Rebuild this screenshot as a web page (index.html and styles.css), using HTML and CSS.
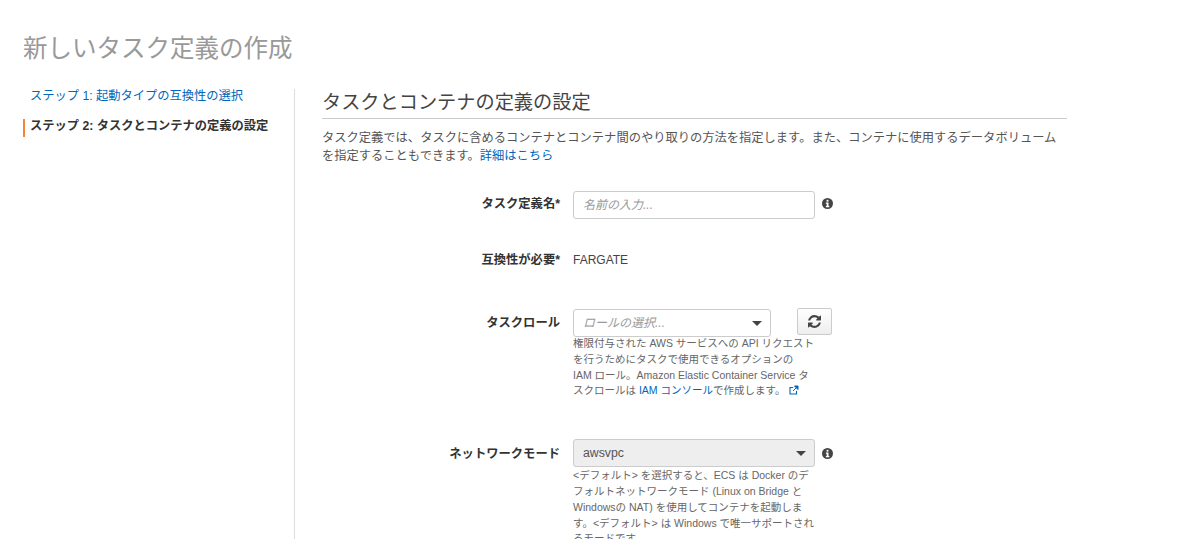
FILE: index.html
```html
<!DOCTYPE html>
<html lang="ja">
<head>
    <meta charset="UTF-8">
    <meta name="viewport" content="width=device-width, initial-scale=1.0">
    <title>新しいタスク定義の作成</title>
    <link rel="stylesheet" href="styles.css">
</head>
<body>
    <h1 class="page-title">新しいタスク定義の作成</h1>

    <div class="wizard">
        <ul class="steps">
            <li class="step"><a href="#">ステップ 1: 起動タイプの互換性の選択</a></li>
            <li class="step step-active">ステップ 2: タスクとコンテナの定義の設定</li>
        </ul>

        <div class="content">
            <h2 class="section-title">タスクとコンテナの定義の設定</h2>
            <p class="intro">タスク定義では、タスクに含めるコンテナとコンテナ間のやり取りの方法を指定します。また、コンテナに使用するデータボリューム<br>を指定することもできます。<a href="#">詳細はこちら</a></p>

            <div class="form-row row-name">
                <label class="form-label">タスク定義名*</label>
                <div class="field">
                    <div class="control-line">
                        <input class="text-input" type="text" placeholder="名前の入力...">
                        <svg class="info-icon" viewBox="0 0 12 12"><circle cx="6" cy="6" r="6" fill="#444"/><rect x="5" y="2" width="2" height="2" fill="#fff"/><path d="M4.2 5h2.9v3.8H8V10H4.2V8.800h.9V6.200h-.9z" fill="#fff"/></svg>
                    </div>
                </div>
            </div>

            <div class="form-row row-compat">
                <label class="form-label">互換性が必要*</label>
                <div class="field static-value">FARGATE</div>
            </div>

            <div class="form-row row-role">
                <label class="form-label">タスクロール</label>
                <div class="field">
                    <div class="control-line">
                        <div class="select select-role"><em>ロールの選択...</em><span class="caret"></span></div>
                        <button class="refresh" type="button">
                            <svg viewBox="0 0 1536 1536" width="13" height="13"><path fill="#444" d="M1511 928q0 5-1 7-64 268-268 434.500T764 1536q-146 0-282.500-55T238 1324l-129 129q-19 19-45 19t-45-19-19-45V960q0-26 19-45t45-19h448q26 0 45 19t19 45-19 45l-137 137q71 66 161 102t187 36q134 0 250-65t186-179q11-17 53-117 8-23 30-23h192q13 0 22.500 9.500t9.500 22.500zm25-800v448q0 26-19 45t-45 19h-448q-26 0-45-19t-19-45 19-45l138-138Q969 256 768 256q-134 0-250 65T332 500q-11 17-53 117-8 23-30 23H50q-13 0-22.500-9.500T18 608v-7q65-268 270-434.500T768 0q146 0 284 55.500T1297 212l130-129q19-19 45-19t45 19 19 45z"/></svg>
                        </button>
                    </div>
                    <p class="help help-role">権限付与された AWS サービスへの API リクエスト<br>を行うためにタスクで使用できるオプションの<br>IAM ロール。Amazon Elastic Container Service タ<br>スクロールは <a href="#">IAM コンソール</a>で作成します。
                        <svg class="external" viewBox="0 0 10 10"><path d="M7.500 5.800V9H1V2.500h3.200" fill="none" stroke="#0066bb" stroke-width="1.100"/><path d="M4 6l4-4M5.500 1H9v3.500z" fill="#0066bb" stroke="#0066bb" stroke-width="1"/></svg>
                    </p>
                </div>
            </div>

            <div class="form-row row-network">
                <label class="form-label">ネットワークモード</label>
                <div class="field">
                    <div class="control-line">
                        <div class="select select-network">awsvpc<span class="caret"></span></div>
                        <svg class="info-icon" viewBox="0 0 12 12"><circle cx="6" cy="6" r="6" fill="#444"/><rect x="5" y="2" width="2" height="2" fill="#fff"/><path d="M4.2 5h2.9v3.800H8V10H4.2V8.800h.9V6.200h-.9z" fill="#fff"/></svg>
                    </div>
                    <p class="help help-network">&lt;デフォルト&gt; を選択すると、ECS は Docker のデ<br>フォルトネットワークモード (Linux on Bridge と<br>Windowsの NAT) を使用してコンテナを起動しま<br>す。&lt;デフォルト&gt; は Windows で唯一サポートされ<br>るモードです。</p>
                </div>
            </div>
        </div>
    </div>
</body>
</html>
```

FILE: styles.css
```css
html, body {
    height: 539px;
    overflow: hidden;
}
body {
    margin: 0;
    background-color: #fff;
    color: #444;
    font-family: "Liberation Sans", "Noto Sans CJK JP", sans-serif;
    font-size: 12px;
}
a {
    color: #0066bb;
    text-decoration: none;
}
.page-title {
    margin: 0;
    padding: 34px 0 0 23px;
    height: 89px;
    box-sizing: border-box;
    color: #999;
    font-size: 24.5px;
    font-weight: 400;
    line-height: 30px;
}
.wizard {
    display: flex;
    margin-left: 23px;
    height: 450px;
}
.steps {
    list-style: none;
    margin: 0;
    padding: 0;
    width: 271px;
    border-right: 1px solid #ddd;
    flex-shrink: 0;
}
.step {
    height: 18px;
    margin-bottom: 12px;
    padding-left: 5px;
    border-left: 2px solid transparent;
    line-height: 14px;
    font-size: 12.25px;
    white-space: nowrap;
}
.step-active {
    border-left-color: #f58536;
    font-weight: 700;
    color: #333;
}
.content {
    width: 745px;
    margin-left: 27px;
}
.section-title {
    margin: 0;
    padding-bottom: 5px;
    height: 24px;
    border-bottom: 1px solid #ccc;
    color: #444;
    font-size: 19.2px;
    font-weight: 400;
    line-height: 28px;
    box-sizing: content-box;
}
.intro {
    margin: 10px 0 0;
    font-size: 12.27px;
    line-height: 18px;
    color: #555;
}
.form-row {
    display: flex;
}
.form-label {
    width: 238px;
    flex-shrink: 0;
    text-align: right;
    font-size: 12.3px;
    font-weight: 700;
    color: #333;
    line-height: 24px;
}
.field {
    margin-left: 13px;
    flex: 1;
}
.row-name {
    margin-top: 26px;
}
.row-name .form-label {
    padding-top: 1px;
}
.row-compat {
    margin-top: 29px;
}
.row-role {
    margin-top: 37px;
}
.row-role .form-label {
    padding-top: 2px;
}
.row-network {
    margin-top: 40px;
}
.row-network .form-label {
    padding-top: 3px;
}
.control-line {
    display: flex;
    align-items: center;
}
.text-input {
    width: 242px;
    height: 28px;
    box-sizing: border-box;
    padding: 0 9px;
    border: 1px solid #ccc;
    border-radius: 3px;
    outline: none;
    font-family: inherit;
    font-size: 12px;
}
.text-input::placeholder {
    color: #999;
    font-style: italic;
}
.info-icon {
    width: 11px;
    height: 11px;
    margin: -3px 0 0 7px;
}
.row-network .info-icon {
    margin-top: 0;
}
.static-value {
    line-height: 24px;
    color: #444;
}
.select {
    position: relative;
    height: 28px;
    box-sizing: border-box;
    padding-left: 9px;
    border: 1px solid #ccc;
    border-radius: 3px;
    line-height: 26px;
}
.select em {
    color: #999;
}
.select-role {
    width: 198px;
}
.select-network {
    width: 242px;
    background-color: #eee;
    color: #555;
    font-size: 12.3px;
}
.caret {
    position: absolute;
    right: 8px;
    top: 11px;
    border-left: 5px solid transparent;
    border-right: 5px solid transparent;
    border-top: 5px solid #444;
}
.refresh {
    display: flex;
    align-items: center;
    justify-content: center;
    width: 35px;
    height: 27px;
    margin: -3px 0 0 26px;
    padding: 0;
    border: 1px solid #ccc;
    border-radius: 2px;
    background: linear-gradient(#fff, #eee);
}
.help {
    margin: 0;
    font-size: 10.5px;
    line-height: 15.8px;
    color: #666;
}
.help-role {
    margin-top: -1px;
}
.help-network {
    margin-top: 1px;
}
.external {
    width: 10px;
    height: 10px;
    margin-left: 1px;
    vertical-align: -1px;
}
```
